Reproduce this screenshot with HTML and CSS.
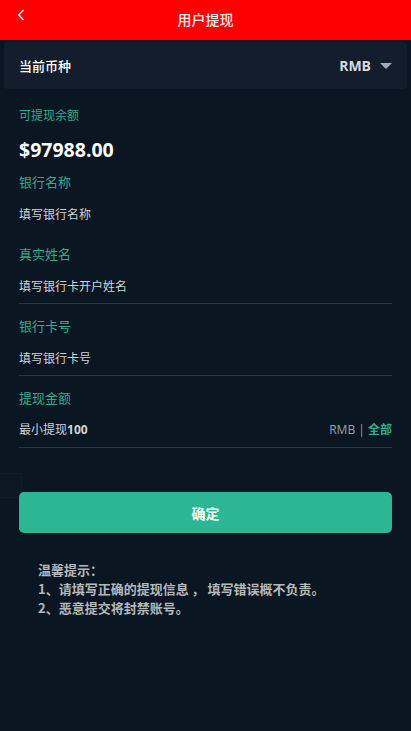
FILE: index.html
```html
<!DOCTYPE html>
<html lang="zh-CN">
<head>
  <meta charset="UTF-8">
  <title>用户提现</title>
  <link rel="stylesheet" href="styles.css">
</head>
<body>

  <!-- Header -->
  <header class="topbar">
    <a class="back" href="#">
      <svg width="8" height="12" viewBox="0 0 8 12"><path d="M6.5 1 L1.8 6 L6.5 11" fill="none" stroke="#f4e6e6" stroke-width="1.6"/></svg>
    </a>
    <div class="title">用户提现</div>
  </header>

  <!-- Currency -->
  <div class="currency">
    <span class="currency-label">当前币种</span>
    <span class="currency-value">RMB <i class="caret"></i></span>
  </div>

  <div class="content">
    <div class="label small">可提现余额</div>
    <div class="balance">$97988.00</div>

    <div class="field no-line">
      <div class="label">银行名称</div>
      <div class="input">填写银行名称</div>
    </div>

    <div class="field">
      <div class="label">真实姓名</div>
      <div class="input">填写银行卡开户姓名</div>
    </div>

    <div class="field">
      <div class="label">银行卡号</div>
      <div class="input">填写银行卡号</div>
    </div>

    <div class="field">
      <div class="label">提现金额</div>
      <div class="input amount">
        <span>最小提现<b>100</b></span>
        <span class="unit">RMB <em>|</em> <a href="#">全部</a></span>
      </div>
    </div>
  </div>

  <div class="actions">
    <span class="check"></span>
    <button class="submit">确定</button>
  </div>

  <div class="tips">
    <p>温馨提示：</p>
    <p>1、请填写正确的提现信息 ， 填写错误概不负责。</p>
    <p>2、恶意提交将封禁账号。</p>
  </div>

</body>
</html>
```
FILE: styles.css
```css
:root {
  --bg: #0a1622;
  --green: #35a98a;
  --line: #2c3742;
}
* { margin: 0; padding: 0; box-sizing: border-box; }
body {
  font-family: "Noto Sans CJK SC", "Noto Sans", sans-serif;
  background: var(--bg);
  color: #fff;
  min-height: 731px;
}
.topbar {
  height: 40px;
  background: #ff0000;
  display: flex;
  align-items: center;
  justify-content: center;
  position: relative;
}
.back {
  position: absolute;
  left: 17px;
  top: 9px;
  display: flex;
}
.title {
  font-size: 14px;
  font-weight: 500;
  color: #fbeaea;
  margin-top: -3px;
}
.currency {
  margin: 2px 4px 0;
  height: 47px;
  background: #131d2c;
  border-radius: 4px;
  display: flex;
  align-items: center;
  justify-content: space-between;
  padding: 0 15px 0 15px;
}
.currency-label { font-size: 13px; font-weight: 500; }
.currency-value {
  font-family: "Open Sans", sans-serif;
  font-size: 14px;
  font-weight: 700;
  color: #d4d8de;
  display: flex;
  align-items: center;
  gap: 9px;
}
.caret {
  width: 0;
  height: 0;
  border-left: 6px solid transparent;
  border-right: 6px solid transparent;
  border-top: 6px solid #a3abb7;
}
.content { padding: 17px 19px 0; }
.label { font-size: 13px; color: var(--green); line-height: 18px; }
.label.small { font-size: 12px; }
.balance {
  font-family: "Open Sans", sans-serif;
  font-size: 19.5px;
  font-weight: 700;
  line-height: 26px;
  margin: 13px 0 10px;
}
.field { border-bottom: 1px solid var(--line); }
.field + .field { margin-top: 13px; }
.field.no-line { border-bottom-color: transparent; }
.input {
  font-size: 12px;
  color: #d0d2d5;
  height: 36px;
  margin-top: 4px;
  display: flex;
  align-items: center;
}
.amount { justify-content: space-between; }
.amount b { font-family: "Open Sans", sans-serif; font-weight: 700; }
.unit { font-family: "Open Sans", sans-serif; color: #9aa1a8; font-size: 12px; }
.unit em { font-style: normal; }
.unit a { color: var(--green); font-weight: 700; text-decoration: none; font-family: "Noto Sans CJK SC", sans-serif; }
.actions {
  padding: 0 19px;
  margin-top: 44px;
  position: relative;
}
.check {
  position: absolute;
  left: 0;
  top: -19px;
  width: 22px;
  height: 25px;
  border: 1px solid #0f1c29;
  border-left: none;
  background: #0b1824;
}
.submit {
  width: 100%;
  height: 41px;
  border: none;
  border-radius: 5px;
  background: #2db693;
  color: #fff;
  font-family: inherit;
  font-size: 14px;
  font-weight: 700;
  position: relative;
}
.tips {
  padding: 27px 38px;
  font-size: 13px;
  font-weight: 700;
  color: #b5b8bb;
  line-height: 19px;
}
```
